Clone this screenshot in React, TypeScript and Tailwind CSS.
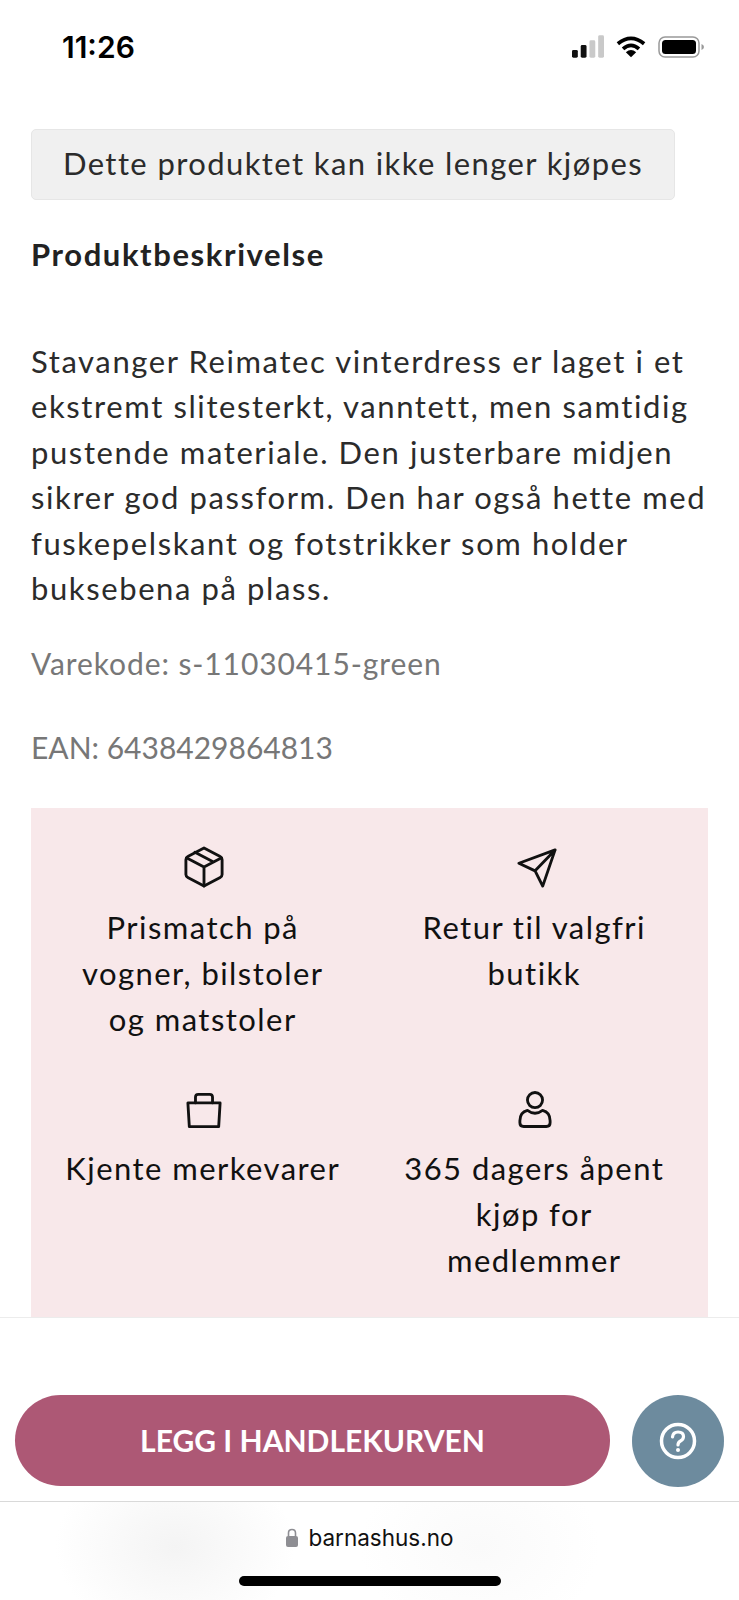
const font = "font-['Lato','Liberation_Sans',sans-serif]";

function BoxIcon() {
  return (
    <svg width="40" height="42" viewBox="0 0 42 44" fill="none" stroke="#111" strokeWidth="3" strokeLinejoin="round" strokeLinecap="round">
      <path d="M21 2 L38 11 Q40 12 40 14.5 V30 Q40 32 38 33 L21 42 L4 33 Q2 32 2 30 V14.5 Q2 12 4 11 Z" />
      <path d="M3 12.5 L21 22 L39 12.5 M21 22 V42 M11.5 6.5 L29.5 16" />
    </svg>
  );
}

function SendIcon() {
  return (
    <svg className="ml-[4px]" width="40" height="40" viewBox="0 0 42 42" fill="none" stroke="#111" strokeWidth="3" strokeLinejoin="round" strokeLinecap="round">
      <path d="M40 2 L2 16 L19 24 L27 40 Z M40 2 L19 24" />
    </svg>
  );
}

function BagIcon() {
  return (
    <svg width="36" height="37" viewBox="0 0 38 38" fill="none" stroke="#111" strokeWidth="3" strokeLinejoin="round" strokeLinecap="round">
      <path d="M2 11 H36 L34.5 36 H3.5 Z" />
      <path d="M10 11 V5 Q10 2 13 2 H25 Q28 2 28 5 V11" />
    </svg>
  );
}

function UserIcon() {
  return (
    <svg width="34" height="39" viewBox="0 0 36 40" fill="none" stroke="#111" strokeWidth="3" strokeLinejoin="round" strokeLinecap="round">
      <circle cx="18" cy="10" r="8" />
      <path d="M10 21 Q18 27 26 21 Q34 23 34 32 V34 Q34 38 30 38 H6 Q2 38 2 34 V32 Q2 23 10 21 Z" />
    </svg>
  );
}

function StatusIcons() {
  return (
    <div className="flex items-center gap-[12px]">
      <svg width="32" height="24" viewBox="0 0 33 24">
        <rect x="0" y="15" width="6" height="8" rx="1.5" fill="#111" />
        <rect x="9" y="10" width="6" height="13" rx="1.5" fill="#111" />
        <rect x="18" y="5" width="6" height="18" rx="1.5" fill="#c9c9c9" />
        <rect x="27" y="0" width="6" height="23" rx="1.5" fill="#c9c9c9" />
      </svg>
      <svg width="30" height="24" viewBox="0 0 32 24" fill="none" stroke="#000" strokeWidth="4">
        <path d="M2 8.5 Q16 -3 30 8.5" />
        <path d="M7.5 14 Q16 6.5 24.5 14" />
        <path d="M16 23 L10.5 17.5 Q16 13 21.5 17.5 Z" fill="#000" stroke="none" />
      </svg>
      <svg width="46" height="24" viewBox="0 0 46 24">
        <rect x="1" y="2" width="40" height="20" rx="6" fill="none" stroke="#999" strokeWidth="1.5" />
        <rect x="4" y="5" width="34" height="14" rx="3.5" fill="#000" />
        <path d="M43.5 9 Q46 10 46 12 Q46 14 43.5 15 Z" fill="#999" />
      </svg>
    </div>
  );
}

function Usp({ icon, lines }: { icon: React.ReactNode; lines: string[] }) {
  return (
    <div className="flex flex-col items-center text-center">
      <div className="ml-[2px] flex h-[44px] items-end">{icon}</div>
      <p className="mt-[16px] text-[31px] leading-[46px] tracking-[1.45px] text-[#111]">
        {lines.map((l) => (
          <span key={l} className="block whitespace-nowrap">{l}</span>
        ))}
      </p>
    </div>
  );
}

export default function App() {
  return (
    <div className={`${font} flex h-[1600px] w-[739px] flex-col overflow-hidden bg-white`}>
      <div className="flex h-[94px] shrink-0 items-center justify-between pl-[62px] pr-[35px]">
        <span className="font-['Inter',sans-serif] text-[30px] font-semibold text-black">11:26</span>
        <StatusIcons />
      </div>

      <main className="flex-1 overflow-hidden px-[31px] pt-[35px]">
        <div className="flex h-[71px] w-[644px] items-center justify-center rounded-[5px] border border-[#e6e6e6] bg-[#f0f0f0] pb-[2px] text-[31px] tracking-[1.4px] text-[#2b2b2b]">
          Dette produktet kan ikke lenger kjøpes
        </div>
        <h2 className="mt-[34px] text-[31px] leading-[40px] font-bold tracking-[1.6px] text-[#222]">
          Produktbeskrivelse
        </h2>
        <p className="mt-[65px] text-[31px] leading-[45.4px] tracking-[1.6px] text-[#2b2b2b]">
          Stavanger Reimatec vinterdress er laget i et
          <br />
          ekstremt slitesterkt, vanntett, men samtidig
          <br />
          pustende materiale. Den justerbare midjen
          <br />
          sikrer god passform. Den har også hette med
          <br />
          fuskepelskant og fotstrikker som holder
          <br />
          buksebena på plass.
        </p>
        <p className="mt-[30px] text-[30px] leading-[45px] tracking-[0.9px] text-[#777]">
          Varekode: s-11030415-green
        </p>
        <p className="mt-[39px] text-[30px] leading-[45px] tracking-[0px] text-[#777]">
          EAN: 6438429864813
        </p>
        <div className="mt-[38px] grid grid-cols-2 gap-y-[43px] bg-[#f8e8ea] pt-[36px] pr-[8px] pb-[34px] pl-[6px]">
          <Usp icon={<BoxIcon />} lines={["Prismatch på", "vogner, bilstoler", "og matstoler"]} />
          <Usp icon={<SendIcon />} lines={["Retur til valgfri", "butikk"]} />
          <Usp icon={<BagIcon />} lines={["Kjente merkevarer"]} />
          <Usp icon={<UserIcon />} lines={["365 dagers åpent", "kjøp for", "medlemmer"]} />
        </div>
      </main>

      <div className="flex h-[184px] shrink-0 items-center gap-[22px] border-t border-[#ececec] bg-white pt-[62px] pl-[15px]">
        <button className="flex h-[91px] w-[595px] items-center justify-center rounded-full bg-[#ad5875] text-[30px] font-bold text-white">
          LEGG I HANDLEKURVEN
        </button>
        <div className="flex h-[92px] w-[92px] items-center justify-center rounded-full bg-[#6d8b9e]">
          <svg width="38" height="38" viewBox="0 0 38 38" fill="none">
            <circle cx="19" cy="19" r="16.5" stroke="#fff" strokeWidth="3.5" />
            <path d="M13.5 15 Q14 10 19 10 Q24.5 10 24.5 14.5 Q24.5 17.5 21.5 19 Q19 20.3 19 23" stroke="#fff" strokeWidth="3.2" strokeLinecap="round" />
            <circle cx="19" cy="28" r="2" fill="#fff" />
          </svg>
        </div>
      </div>

      <div className="flex h-[99px] shrink-0 flex-col items-center border-t border-[#d9d9d9] bg-[radial-gradient(ellipse_120px_90px_at_175px_45px,#f4f4f4,#ffffff00),radial-gradient(ellipse_120px_90px_at_480px_45px,#fafafa,#ffffff00)] pt-[21px]">
        <div className="flex items-center gap-[9px]">
          <svg width="14" height="20" viewBox="0 0 14 20">
            <rect x="1" y="8" width="12" height="11" rx="2" fill="#8e8e93" />
            <path d="M3.5 8 V5 Q3.5 1.5 7 1.5 Q10.5 1.5 10.5 5 V8" fill="none" stroke="#8e8e93" strokeWidth="1.6" />
          </svg>
          <span className="font-['Inter',sans-serif] text-[22.5px] leading-[30px] text-[#111]">barnashus.no</span>
        </div>
        <div className="mt-[23px] h-[10px] w-[262px] rounded-full bg-black" />
      </div>
    </div>
  );
}
